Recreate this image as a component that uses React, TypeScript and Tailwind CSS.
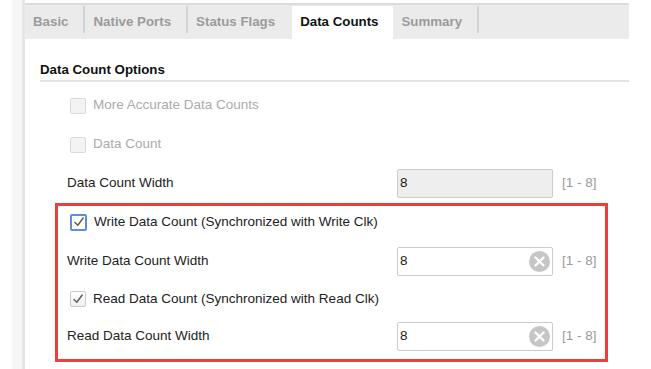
import React from 'react';

const font = { fontFamily: '"Liberation Sans", Arial, sans-serif' };

function Check({ color = '#5f5f5f' }: { color?: string }) {
  return (
    <svg width="12" height="12" viewBox="0 0 12 12">
      <path d="M2 6.5 L4.8 9.3 L10.2 2" fill="none" stroke={color} strokeWidth="1.5" strokeLinecap="round" strokeLinejoin="round" />
    </svg>
  );
}

function Checkbox({ state }: { state: 'disabled' | 'focused' | 'checked' }) {
  if (state === 'disabled') {
    return <div className="w-[16px] h-[16px] rounded-[2px] border border-[#dadada] bg-[#f3f3f3]" />;
  }
  if (state === 'focused') {
    return (
      <div className="w-[17px] h-[17px] rounded-[2px] border-2 border-[#5d8fd9] bg-white flex items-center justify-center">
        <Check />
      </div>
    );
  }
  return (
    <div className="w-[16px] h-[16px] rounded-[2px] border border-[#c9c9c9] bg-gradient-to-b from-white to-[#f0f0f0] flex items-center justify-center">
      <Check />
    </div>
  );
}

function ClearIcon() {
  return (
    <svg width="21" height="21" viewBox="0 0 21 21">
      <circle cx="10.5" cy="10.5" r="10.5" fill="#c6c6c6" />
      <path d="M6.5 6.5 L14.5 14.5 M14.5 6.5 L6.5 14.5" stroke="white" strokeWidth="2.4" strokeLinecap="round" />
    </svg>
  );
}

function NumberField({ disabled = false }: { disabled?: boolean }) {
  return (
    <div className="flex items-center">
      <div
        className={`w-[156px] h-[29px] rounded-[2px] border border-[#cccccc] flex items-center pl-[2px] pr-[2px] ${
          disabled ? 'bg-[#eeeeee]' : 'bg-white'
        }`}
      >
        <span className="flex-1 text-[13.5px] text-[#1a1a1a]">8</span>
        {!disabled && <ClearIcon />}
      </div>
      <span className="ml-[9px] text-[13.5px] text-[#9a9a9a]">[1 - 8]</span>
    </div>
  );
}

function CheckRow({ label, state, h }: { label: string; state: 'disabled' | 'focused' | 'checked'; h: string }) {
  return (
    <div className={`flex items-center ${h}`}>
      <Checkbox state={state} />
      <span className={`ml-[7px] text-[13.5px] ${state === 'disabled' ? 'text-[#ababab]' : 'text-[#222]'}`}>{label}</span>
    </div>
  );
}

function FieldRow({ label, disabled, h }: { label: string; disabled?: boolean; h: string }) {
  return (
    <div className={`flex items-center ${h}`}>
      <span className="w-[330px] text-[13.5px] text-[#222]">{label}</span>
      <NumberField disabled={disabled} />
    </div>
  );
}

const tabs = ['Basic', 'Native Ports', 'Status Flags', 'Data Counts', 'Summary'];

export default function App() {
  return (
    <div className="w-[651px] h-[369px] bg-white flex overflow-hidden" style={font}>
      <div className="w-[12px]" />
      <div className="w-[10px] bg-[#f6f6f6]" />
      <div className="w-[607px] flex flex-col border-l-[3px] border-[#e6e6e6]">
        <div className="mt-[3px] border-t-2 border-[#dcdcdc] h-[36px] bg-[#ebebeb] flex items-end">
          {tabs.map((t, i) => {
            const active = t === 'Data Counts';
            const beforeActive = tabs[i + 1] === 'Data Counts';
            return (
              <div key={t} className={`h-[33px] flex items-start ${active ? 'bg-white' : ''}`}>
                <span
                  className={`mt-[8px] leading-[16px] pl-[8px] pr-[15px] text-[13.3px] font-bold ${
                    active ? 'text-[#111]' : 'text-[#9b9b9b]'
                  }`}
                >
                  {t}
                </span>
                {!active && !beforeActive && <div className="w-[2px] h-[27px] bg-[#d4d4d4]" />}
                {beforeActive && <div className="w-[2px]" />}
              </div>
            );
          })}
        </div>
        <div className="pl-[15px]">
          <div className="mt-[23px] pb-[2px] border-b-2 border-[#e3e3e3] text-[13.3px] font-bold text-[#111] leading-[16px]">
            Data Count Options
          </div>
        </div>
        <div className="mt-[4px] pl-[45px]">
          <CheckRow label="More Accurate Data Counts" state="disabled" h="h-[39px]" />
          <CheckRow label="Data Count" state="disabled" h="h-[39px]" />
        </div>
        <div className="pl-[42px]">
          <FieldRow label="Data Count Width" disabled h="h-[39px]" />
        </div>
        <div className="ml-[30px] w-[553px] border-[3px] border-[#ef3d3d] pt-[1px]">
          <div className="pl-[12px]">
            <CheckRow label="Write Data Count (Synchronized with Write Clk)" state="focused" h="h-[30px]" />
          </div>
          <div className="pl-[9px]">
            <FieldRow label="Write Data Count Width" h="h-[48px]" />
          </div>
          <div className="pl-[12px]">
            <CheckRow label="Read Data Count (Synchronized with Read Clk)" state="checked" h="h-[28px]" />
          </div>
          <div className="pl-[9px]">
            <FieldRow label="Read Data Count Width" h="h-[46px]" />
          </div>
        </div>
      </div>
    </div>
  );
}
